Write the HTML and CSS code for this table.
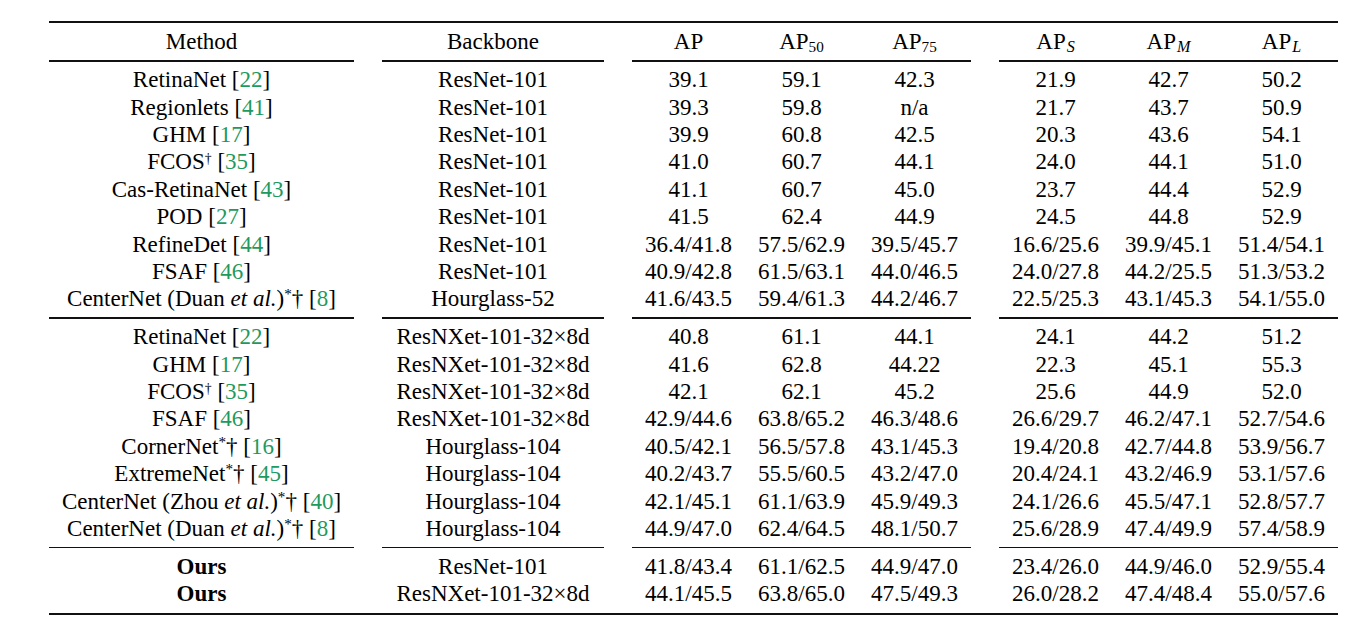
FILE: index.html
```html
<!DOCTYPE html>
<html>
<head>
<meta charset="utf-8">
<link rel="stylesheet" href="styles.css">
</head>
<body>
<div class="table">
  <div class="rule-top"></div>
  <div class="section head">
    <div class="row">
      <div class="m">Method</div>
      <div class="b">Backbone</div>
      <div class="g"><span>AP</span><span>AP<sub>50</sub></span><span>AP<sub>75</sub></span></div>
      <div class="g"><span>AP<sub class="it">S</sub></span><span>AP<sub class="it">M</sub></span><span>AP<sub class="it">L</sub></span></div>
    </div>
  </div>
  <div class="cmid"><i></i><i></i><i></i><i></i></div>
  <div class="section">
    <div class="row"><div class="m">RetinaNet [<span class="c">22</span>]</div><div class="b">ResNet-101</div><div class="g"><span>39.1</span><span>59.1</span><span>42.3</span></div><div class="g"><span>21.9</span><span>42.7</span><span>50.2</span></div></div>
    <div class="row"><div class="m">Regionlets [<span class="c">41</span>]</div><div class="b">ResNet-101</div><div class="g"><span>39.3</span><span>59.8</span><span>n/a</span></div><div class="g"><span>21.7</span><span>43.7</span><span>50.9</span></div></div>
    <div class="row"><div class="m">GHM [<span class="c">17</span>]</div><div class="b">ResNet-101</div><div class="g"><span>39.9</span><span>60.8</span><span>42.5</span></div><div class="g"><span>20.3</span><span>43.6</span><span>54.1</span></div></div>
    <div class="row"><div class="m">FCOS<sup class="dag">†</sup> [<span class="c">35</span>]</div><div class="b">ResNet-101</div><div class="g"><span>41.0</span><span>60.7</span><span>44.1</span></div><div class="g"><span>24.0</span><span>44.1</span><span>51.0</span></div></div>
    <div class="row"><div class="m">Cas-RetinaNet [<span class="c">43</span>]</div><div class="b">ResNet-101</div><div class="g"><span>41.1</span><span>60.7</span><span>45.0</span></div><div class="g"><span>23.7</span><span>44.4</span><span>52.9</span></div></div>
    <div class="row"><div class="m">POD [<span class="c">27</span>]</div><div class="b">ResNet-101</div><div class="g"><span>41.5</span><span>62.4</span><span>44.9</span></div><div class="g"><span>24.5</span><span>44.8</span><span>52.9</span></div></div>
    <div class="row"><div class="m">RefineDet [<span class="c">44</span>]</div><div class="b">ResNet-101</div><div class="g"><span>36.4/41.8</span><span>57.5/62.9</span><span>39.5/45.7</span></div><div class="g"><span>16.6/25.6</span><span>39.9/45.1</span><span>51.4/54.1</span></div></div>
    <div class="row"><div class="m">FSAF [<span class="c">46</span>]</div><div class="b">ResNet-101</div><div class="g"><span>40.9/42.8</span><span>61.5/63.1</span><span>44.0/46.5</span></div><div class="g"><span>24.0/27.8</span><span>44.2/25.5</span><span>51.3/53.2</span></div></div>
    <div class="row"><div class="m">CenterNet (Duan <em>et al.</em>)<sup>*</sup>† [<span class="c">8</span>]</div><div class="b">Hourglass-52</div><div class="g"><span>41.6/43.5</span><span>59.4/61.3</span><span>44.2/46.7</span></div><div class="g"><span>22.5/25.3</span><span>43.1/45.3</span><span>54.1/55.0</span></div></div>
  </div>
  <div class="cmid"><i></i><i></i><i></i><i></i></div>
  <div class="section">
    <div class="row"><div class="m">RetinaNet [<span class="c">22</span>]</div><div class="b">ResNXet-101-32×8d</div><div class="g"><span>40.8</span><span>61.1</span><span>44.1</span></div><div class="g"><span>24.1</span><span>44.2</span><span>51.2</span></div></div>
    <div class="row"><div class="m">GHM [<span class="c">17</span>]</div><div class="b">ResNXet-101-32×8d</div><div class="g"><span>41.6</span><span>62.8</span><span>44.22</span></div><div class="g"><span>22.3</span><span>45.1</span><span>55.3</span></div></div>
    <div class="row"><div class="m">FCOS<sup class="dag">†</sup> [<span class="c">35</span>]</div><div class="b">ResNXet-101-32×8d</div><div class="g"><span>42.1</span><span>62.1</span><span>45.2</span></div><div class="g"><span>25.6</span><span>44.9</span><span>52.0</span></div></div>
    <div class="row"><div class="m">FSAF [<span class="c">46</span>]</div><div class="b">ResNXet-101-32×8d</div><div class="g"><span>42.9/44.6</span><span>63.8/65.2</span><span>46.3/48.6</span></div><div class="g"><span>26.6/29.7</span><span>46.2/47.1</span><span>52.7/54.6</span></div></div>
    <div class="row"><div class="m">CornerNet<sup>*</sup>† [<span class="c">16</span>]</div><div class="b">Hourglass-104</div><div class="g"><span>40.5/42.1</span><span>56.5/57.8</span><span>43.1/45.3</span></div><div class="g"><span>19.4/20.8</span><span>42.7/44.8</span><span>53.9/56.7</span></div></div>
    <div class="row"><div class="m">ExtremeNet<sup>*</sup>† [<span class="c">45</span>]</div><div class="b">Hourglass-104</div><div class="g"><span>40.2/43.7</span><span>55.5/60.5</span><span>43.2/47.0</span></div><div class="g"><span>20.4/24.1</span><span>43.2/46.9</span><span>53.1/57.6</span></div></div>
    <div class="row"><div class="m">CenterNet (Zhou <em>et al.</em>)<sup>*</sup>† [<span class="c">40</span>]</div><div class="b">Hourglass-104</div><div class="g"><span>42.1/45.1</span><span>61.1/63.9</span><span>45.9/49.3</span></div><div class="g"><span>24.1/26.6</span><span>45.5/47.1</span><span>52.8/57.7</span></div></div>
    <div class="row"><div class="m">CenterNet (Duan <em>et al.</em>)<sup>*</sup>† [<span class="c">8</span>]</div><div class="b">Hourglass-104</div><div class="g"><span>44.9/47.0</span><span>62.4/64.5</span><span>48.1/50.7</span></div><div class="g"><span>25.6/28.9</span><span>47.4/49.9</span><span>57.4/58.9</span></div></div>
  </div>
  <div class="cmid"><i></i><i></i><i></i><i></i></div>
  <div class="section">
    <div class="row"><div class="m"><strong>Ours</strong></div><div class="b">ResNet-101</div><div class="g"><span>41.8/43.4</span><span>61.1/62.5</span><span>44.9/47.0</span></div><div class="g"><span>23.4/26.0</span><span>44.9/46.0</span><span>52.9/55.4</span></div></div>
    <div class="row"><div class="m"><strong>Ours</strong></div><div class="b">ResNXet-101-32×8d</div><div class="g"><span>44.1/45.5</span><span>63.8/65.0</span><span>47.5/49.3</span></div><div class="g"><span>26.0/28.2</span><span>47.4/48.4</span><span>55.0/57.6</span></div></div>
  </div>
  <div class="rule-bottom"></div>
</div>
</body>
</html>
```

FILE: styles.css
```css
html, body {
  margin: 0;
  padding: 0;
  background: #fff;
}
body {
  font-family: "Liberation Serif", "Times New Roman", serif;
  font-size: 23px;
  color: #000;
}
.table {
  width: 1289px;
  margin: 21px 0 0 49px;
}
.rule-top {
  height: 2px;
  background: #111;
}
.rule-bottom {
  height: 2px;
  background: #111;
}
.section {
  padding: 4.6px 0 4.8px;
}
.section.head {
  padding: 5px 0 5px;
}
.row {
  display: flex;
  column-gap: 28px;
  line-height: 27.4px;
  height: 27.4px;
  white-space: nowrap;
}
.m {
  width: 305px;
  text-align: center;
}
.b {
  width: 222px;
  text-align: center;
}
.g {
  width: 339px;
  display: grid;
  grid-template-columns: repeat(3, 1fr);
  text-align: center;
}
.cmid {
  display: flex;
  column-gap: 28px;
}
.cmid i {
  display: block;
  height: 1.2px;
  background: #111;
}
.cmid i:nth-child(1) { width: 305px; }
.cmid i:nth-child(2) { width: 222px; }
.cmid i:nth-child(3) { width: 339px; }
.cmid i:nth-child(4) { width: 339px; }
.c {
  color: #1f9a5e;
}
em {
  font-style: italic;
}
strong {
  font-weight: bold;
}
sup {
  font-size: 0.66em;
  line-height: 0;
  vertical-align: 0.45em;
}
sup.dag {
  font-size: 0.6em;
}
sub {
  font-size: 0.66em;
  line-height: 0;
  vertical-align: -0.2em;
}
sub.it {
  font-style: italic;
  font-size: 0.7em;
  margin-left: 1px;
}
```
